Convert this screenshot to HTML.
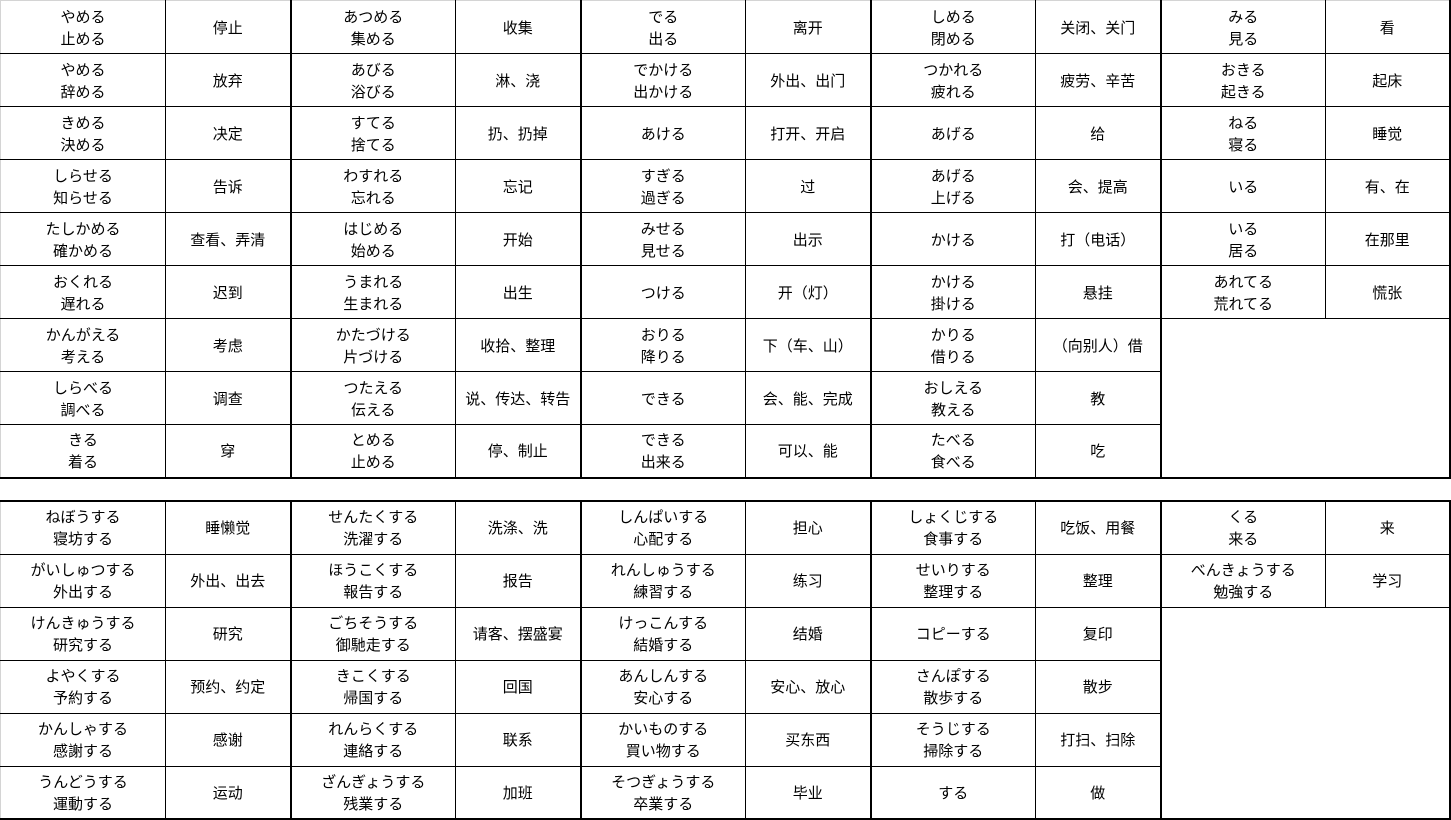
<!DOCTYPE html>
<html><head><meta charset="utf-8"><style>
html,body{margin:0;padding:0;background:#fff;width:1451px;height:820px;overflow:hidden}
table{position:absolute;left:0;border-collapse:collapse;table-layout:fixed;width:1449px;font-family:"Liberation Sans","Noto Sans CJK SC",sans-serif;font-size:15px;color:#000}
td{border:1px solid #000;text-align:center;vertical-align:middle;padding:3px 0 0 0;line-height:22px;white-space:nowrap;overflow:hidden}
tr{height:53px}
td.f{border-left:1px solid #d4d4d4}
td.t{border-left:2px solid #000}
td.r{border-right:2px solid #000}
#a{top:0}
#a tr:first-child td{border-top:1px solid #d4d4d4}
#a tr:last-child td{border-bottom:2px solid #000}
#b{top:500px}
#b tr:first-child td{border-top:2px solid #000}
#b tr:last-child td{border-bottom:2px solid #000}
td.e{border-bottom:2px solid #000}
</style></head><body>
<table id="a">
<colgroup><col style="width:165px"><col style="width:125px"><col style="width:165px"><col style="width:125px"><col style="width:165px"><col style="width:125px"><col style="width:165px"><col style="width:125px"><col style="width:165px"><col style="width:124px"></colgroup>
<tr><td class="f">やめる<br>止める</td><td>停止</td><td class="t">あつめる<br>集める</td><td>收集</td><td class="t">でる<br>出る</td><td>离开</td><td class="t">しめる<br>閉める</td><td>关闭、关门</td><td class="t">みる<br>見る</td><td class="r">看</td></tr>
<tr><td class="f">やめる<br>辞める</td><td>放弃</td><td class="t">あびる<br>浴びる</td><td>淋、浇</td><td class="t">でかける<br>出かける</td><td>外出、出门</td><td class="t">つかれる<br>疲れる</td><td>疲劳、辛苦</td><td class="t">おきる<br>起きる</td><td class="r">起床</td></tr>
<tr><td class="f">きめる<br>決める</td><td>决定</td><td class="t">すてる<br>捨てる</td><td>扔、扔掉</td><td class="t">あける</td><td>打开、开启</td><td class="t">あげる</td><td>给</td><td class="t">ねる<br>寝る</td><td class="r">睡觉</td></tr>
<tr><td class="f">しらせる<br>知らせる</td><td>告诉</td><td class="t">わすれる<br>忘れる</td><td>忘记</td><td class="t">すぎる<br>過ぎる</td><td>过</td><td class="t">あげる<br>上げる</td><td>会、提高</td><td class="t">いる</td><td class="r">有、在</td></tr>
<tr><td class="f">たしかめる<br>確かめる</td><td>查看、弄清</td><td class="t">はじめる<br>始める</td><td>开始</td><td class="t">みせる<br>見せる</td><td>出示</td><td class="t">かける</td><td>打（电话）</td><td class="t">いる<br>居る</td><td class="r">在那里</td></tr>
<tr><td class="f">おくれる<br>遅れる</td><td>迟到</td><td class="t">うまれる<br>生まれる</td><td>出生</td><td class="t">つける</td><td>开（灯）</td><td class="t">かける<br>掛ける</td><td>悬挂</td><td class="t">あれてる<br>荒れてる</td><td class="r">慌张</td></tr>
<tr><td class="f">かんがえる<br>考える</td><td>考虑</td><td class="t">かたづける<br>片づける</td><td>收拾、整理</td><td class="t">おりる<br>降りる</td><td>下（车、山）</td><td class="t">かりる<br>借りる</td><td>（向别人）借</td><td class="t r e" colspan="2" rowspan="3"></td></tr>
<tr><td class="f">しらべる<br>調べる</td><td>调查</td><td class="t">つたえる<br>伝える</td><td>说、传达、转告</td><td class="t">できる</td><td>会、能、完成</td><td class="t">おしえる<br>教える</td><td>教</td></tr>
<tr><td class="f">きる<br>着る</td><td>穿</td><td class="t">とめる<br>止める</td><td>停、制止</td><td class="t">できる<br>出来る</td><td>可以、能</td><td class="t">たべる<br>食べる</td><td>吃</td></tr>
</table>
<table id="b">
<colgroup><col style="width:165px"><col style="width:125px"><col style="width:165px"><col style="width:125px"><col style="width:165px"><col style="width:125px"><col style="width:165px"><col style="width:125px"><col style="width:165px"><col style="width:124px"></colgroup>
<tr><td class="f">ねぼうする<br>寝坊する</td><td>睡懒觉</td><td class="t">せんたくする<br>洗濯する</td><td>洗涤、洗</td><td class="t">しんぱいする<br>心配する</td><td>担心</td><td class="t">しょくじする<br>食事する</td><td>吃饭、用餐</td><td class="t">くる<br>来る</td><td class="r">来</td></tr>
<tr><td class="f">がいしゅつする<br>外出する</td><td>外出、出去</td><td class="t">ほうこくする<br>報告する</td><td>报告</td><td class="t">れんしゅうする<br>練習する</td><td>练习</td><td class="t">せいりする<br>整理する</td><td>整理</td><td class="t">べんきょうする<br>勉強する</td><td class="r">学习</td></tr>
<tr><td class="f">けんきゅうする<br>研究する</td><td>研究</td><td class="t">ごちそうする<br>御馳走する</td><td>请客、摆盛宴</td><td class="t">けっこんする<br>結婚する</td><td>结婚</td><td class="t">コピーする</td><td>复印</td><td class="t r e" colspan="2" rowspan="4"></td></tr>
<tr><td class="f">よやくする<br>予約する</td><td>预约、约定</td><td class="t">きこくする<br>帰国する</td><td>回国</td><td class="t">あんしんする<br>安心する</td><td>安心、放心</td><td class="t">さんぽする<br>散歩する</td><td>散步</td></tr>
<tr><td class="f">かんしゃする<br>感謝する</td><td>感谢</td><td class="t">れんらくする<br>連絡する</td><td>联系</td><td class="t">かいものする<br>買い物する</td><td>买东西</td><td class="t">そうじする<br>掃除する</td><td>打扫、扫除</td></tr>
<tr><td class="f">うんどうする<br>運動する</td><td>运动</td><td class="t">ざんぎょうする<br>残業する</td><td>加班</td><td class="t">そつぎょうする<br>卒業する</td><td>毕业</td><td class="t">する</td><td>做</td></tr>
</table>
</body></html>
